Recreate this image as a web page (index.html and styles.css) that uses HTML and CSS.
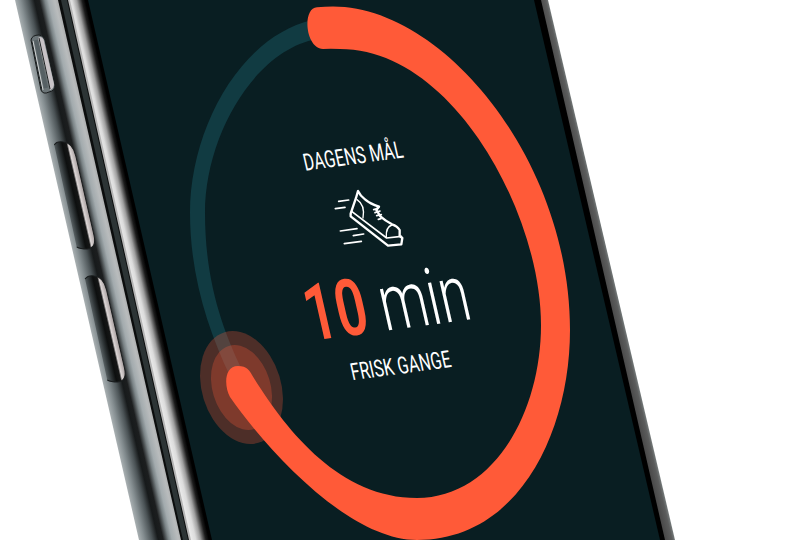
FILE: index.html
```html
<!DOCTYPE html>
<html lang="da">
<head>
<meta charset="utf-8">
<meta name="viewport" content="width=device-width, initial-scale=1">
<title>Dagens mål</title>
<link rel="stylesheet" href="styles.css">
</head>
<body>
<main class="scene">
  <svg class="phone" viewBox="0 0 810 540" preserveAspectRatio="xMidYMid slice" aria-hidden="true">
    <defs>
      <linearGradient id="frame" gradientUnits="userSpaceOnUse" x1="15" y1="0" x2="60" y2="0">
        <stop offset="0" stop-color="#a9b0b2"/>
        <stop offset=".12" stop-color="#858e91"/>
        <stop offset=".3" stop-color="#4b5356"/>
        <stop offset=".43" stop-color="#171a1b"/>
        <stop offset=".54" stop-color="#1c1e1f"/>
        <stop offset=".66" stop-color="#7b8487"/>
        <stop offset=".74" stop-color="#a3abae"/>
        <stop offset=".88" stop-color="#b9bcbd"/>
        <stop offset="1" stop-color="#a6a6a6"/>
      </linearGradient>
      <linearGradient id="bezel" gradientUnits="userSpaceOnUse" x1="65" y1="0" x2="88" y2="0">
        <stop offset="0" stop-color="#f2f2f2"/>
        <stop offset=".3" stop-color="#dcdcdc"/>
        <stop offset=".5" stop-color="#a0a0a0"/>
        <stop offset=".62" stop-color="#5c5c5c"/>
        <stop offset=".74" stop-color="#1c1c1c"/>
        <stop offset=".88" stop-color="#000"/>
      </linearGradient>
      <linearGradient id="key" gradientUnits="userSpaceOnUse" x1="18" y1="0" x2="40" y2="0">
        <stop offset="0" stop-color="#6d7679"/>
        <stop offset=".3" stop-color="#2f3537"/>
        <stop offset=".5" stop-color="#0d0f0f"/>
        <stop offset=".7" stop-color="#151616"/>
        <stop offset=".78" stop-color="#dcd6d6"/>
        <stop offset="1" stop-color="#a89f9f"/>
      </linearGradient>
      <linearGradient id="edge" gradientUnits="userSpaceOnUse" x1="539" y1="0" x2="549" y2="0" gradientTransform="skewX(13.2)">
        <stop offset="0" stop-color="#4a4a4a"/>
        <stop offset=".65" stop-color="#5b5c5c"/>
        <stop offset="1" stop-color="#7c8383"/>
      </linearGradient>
    </defs>

    <!-- steel frame -->
    <g transform="skewX(12.93)">
      <rect x="15" y="0" width="47" height="540" fill="url(#frame)"/>
      <rect x="64" y="0" width="26" height="540" fill="url(#bezel)"/>
    </g>
    <path d="M58 0H69L190 540H181Z" fill="#0b0d0d"/>
    <path d="M61 0H67L188 540H183Z" fill="#2c3435"/>
    <path d="M68 0H70L191 540H189Z" fill="#b5b5b5"/>

    <!-- side keys -->
    <path d="M31 40Q32 35 39 35Q43 35 45 40L55 85Q55 91 49 92Q43 95 41 90Z" fill="#6b7477" stroke="#181b1c" stroke-width="1"/>
    <path d="M40 37Q43 37 44 41L54 84Q54 89 50 90L38 38Z" fill="#c8c3c7"/>
    <path d="M36 40L46 88" stroke="#566064" stroke-width="4" fill="none"/>
    <path d="M39 38L50 89M32 41L42 90" stroke="#1d2223" stroke-width="1" fill="none"/>
    <path d="M33 41L43 90" stroke="#d0d3d4" stroke-width="1" fill="none"/>
    <g transform="skewX(12.93)">
      <path d="M21 145Q24 141 31 142Q40 143 40 156V235Q40 248 30 249Q22 249 20 247Z" fill="url(#key)"/>
      <path d="M21 145Q24 141 31 142Q40 143 40 156V235Q40 248 30 249Q23 249 20 247" fill="none" stroke="#1a1d1e" stroke-width="1"/>
      <path d="M21 279Q25 275 31 276Q40 277 40 290V368Q40 381 30 382Q22 382 20 380Z" fill="url(#key)"/>
      <path d="M21 279Q25 275 31 276Q40 277 40 290V368Q40 381 30 382Q23 382 20 380" fill="none" stroke="#1a1d1e" stroke-width="1"/>
    </g>

    <!-- glass -->
    <path d="M536 0H548L675 540H660Z" fill="url(#edge)"/>
    <path d="M532 0H541L665 540H656Z" fill="#000"/>
    <path d="M88 0H534L660 540H212Z" fill="#091e22"/>

    <!-- progress ring -->
    <path d="M312 20C240 37 190 129 190 213C190 275 208 330 230 376L245 376C222 330 205 280 205 213C205 135 255 50 317 39Z" fill="#113b42"/>
    <g fill="#ff5a38" fill-opacity=".28">
      <ellipse cx="241.500" cy="387.500" rx="39.600" ry="57.800" transform="rotate(-17 241.500 387.500)"/>
      <ellipse cx="241.500" cy="387.500" rx="29" ry="43.500" transform="rotate(-17 241.500 387.500)"/>
    </g>
    <path d="M317 7.300Q325 6.500 333 6.500C444 6.500 570 161 570 330C570 430 520 540 417 540C347 540 264 446 230 397C224 386 224 366 238 366C247 366 250 371 252 375C286 430 339 498 417 498C494 498 541 412 541 325C541 213 453 49 340 49Q330 48.500 323 49C305 48 302 8 317 7.300Z" fill="#ff5a38"/>

    <!-- running shoe -->
    <g transform="translate(290 130) scale(.3333)" fill="none" stroke="#fff" stroke-linejoin="round" stroke-linecap="round">
      <path d="M204 183L198 204L182 251V259L294 347L334 343L337 324L329 318V300Q322 288 306 283Q286 272 271 259L259 240L267 230Q240 221 225 208Q211 198 204 183Z" stroke-width="7"/>
      <path d="M185 244L290 324L334 319" stroke-width="5"/>
      <path d="M201 209Q226 225 219 264M306 285Q287 291 289 321" stroke-width="4"/>
      <path d="M267 230Q260 238 251 239M270 243L255 248M274 254L260 257M273 266L265 268" stroke-width="5"/>
      <path d="M146 214L176 210M136 236L165 232M151 303L201 296M190 317L221 312M163 341L214 334" stroke-width="5"/>
    </g>
  </svg>

  <section class="goal">
    <h1 class="label">DAGENS MÅL</h1>
    <p class="amount"><strong class="value">10</strong> min</p>
    <p class="label">FRISK GANGE</p>
  </section>
</main>
</body>
</html>
```
FILE: styles.css
```css
body {
  margin: 0;
  background: #fff;
  font-family: Roboto, "Liberation Sans", sans-serif;
}

.scene {
  display: grid;
  place-items: center;
  min-height: 100vh;
  overflow: hidden;
}

.phone,
.goal {
  grid-area: 1 / 1;
}

.phone {
  display: block;
  width: 100%;
  height: 100vh;
}

/* The copy lies on the tilted plane of the phone's glass. */
.goal {
  display: flex;
  flex-direction: column;
  align-items: center;
  margin: 0 56px 18px 0;
  color: #fff;
  white-space: nowrap;
  transform: matrix(0.67, -0.09, 0.22, 0.97, 0, 0);
}

.label {
  margin: 0;
  font-size: 24px;
  font-weight: 400;
  line-height: 28px;
}

.amount {
  margin: 96px 0 8px;
  font-size: 80px;
  font-weight: 300;
  line-height: 84px;
}

.value {
  color: #ff5a38;
  font-weight: 600;
}
```
